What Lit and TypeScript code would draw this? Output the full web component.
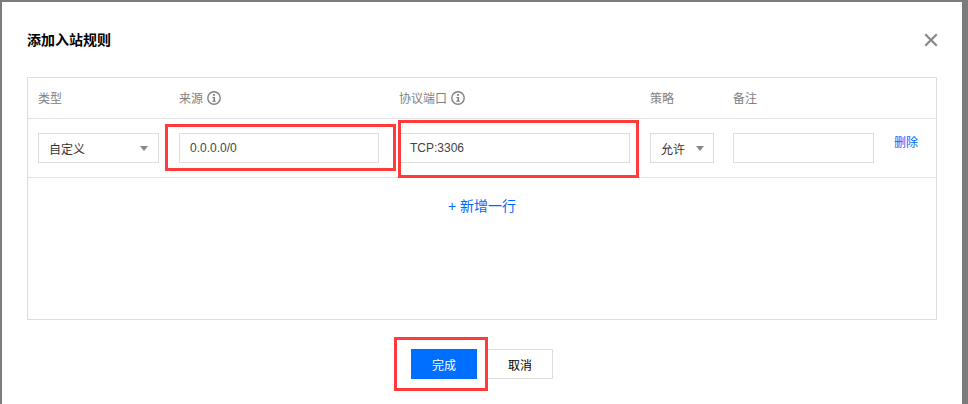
import { LitElement, html, css, svg } from "lit";
import { customElement } from "lit/decorators.js";

const info = svg`<svg class="info" width="14" height="14" viewBox="0 0 14 14"><circle cx="7" cy="7" r="6.2" fill="none" stroke="#808080" stroke-width="1.4"/><rect x="6" y="3" width="2" height="1.8" fill="#808080"/><path d="M5.4 6h2.6v3.8h.9v1H5.2v-1h1.2V7H5.4z" fill="#808080"/></svg>`;

@customElement("app-root")
export class AppRoot extends LitElement {
  static styles = css`
    :host {
      display: block;
      width: 968px;
      height: 404px;
      overflow: hidden;
      background: #7b7b7b;
      font-family: "Liberation Sans", "Noto Sans CJK SC", sans-serif;
      font-size: 12px;
      color: #000;
    }
    .dialog {
      position: relative;
      box-sizing: border-box;
      width: 960px;
      height: 402px;
      margin: 2px 0 0 2px;
      padding: 0 25px;
      background: #fff;
    }
    .head {
      display: flex;
      justify-content: space-between;
      align-items: center;
      height: 75px;
      padding-bottom: 2px;
      box-sizing: border-box;
    }
    .title {
      font-size: 14px;
      font-weight: 700;
      color: #000;
    }
    .close {
      display: block;
      margin: 3px -1px 0 0;
    }
    .table {
      box-sizing: border-box;
      height: 243px;
      border: 1px solid #ddd;
    }
    .row {
      display: grid;
      grid-template-columns: 121px 200px 231px 63px 141px auto;
      column-gap: 20px;
      padding-left: 10px;
      box-sizing: border-box;
      border-bottom: 1px solid #e2e2e2;
    }
    .header {
      height: 41px;
      padding-bottom: 2px;
      align-items: center;
      color: #808080;
    }
    .th {
      display: flex;
      align-items: center;
      gap: 4px;
    }
    .info {
      margin-top: 2px;
    }
    .body {
      height: 59px;
      padding-top: 14px;
      align-items: start;
    }
    .field {
      box-sizing: border-box;
      height: 30px;
      border: 1px solid #ddd;
      padding: 0 10px;
      display: flex;
      align-items: center;
      justify-content: space-between;
      color: #333;
      background: #fff;
    }
    .value {
      color: #444;
    }
    .policy {
      margin-right: -1px;
      padding-right: 9px;
    }
    .arrow {
      width: 0;
      height: 0;
      border-left: 4px solid transparent;
      border-right: 4px solid transparent;
      border-top: 5px solid #888;
    }
    .del {
      color: #0066ff;
      line-height: 18px;
      padding-top: 1px;
    }
    .add {
      height: 54px;
      display: flex;
      align-items: center;
      justify-content: center;
      color: #0066ff;
      font-size: 14px;
    }
    .foot {
      display: flex;
      justify-content: center;
      gap: 10px;
      padding-top: 29px;
    }
    .btn {
      box-sizing: border-box;
      height: 30px;
      width: 66px;
      display: flex;
      align-items: center;
      justify-content: center;
      border: 1px solid #ddd;
      background: #fff;
      color: #000;
    }
    .primary {
      background: #006eff;
      border-color: #006eff;
      color: #fff;
    }
    .mark {
      position: absolute;
      box-sizing: border-box;
      border: 3px solid #ff3b3b;
    }
    .m1 { left: 163px; top: 122px; width: 231px; height: 47px; }
    .m2 { left: 396px; top: 118px; width: 241px; height: 58px; }
    .m3 { left: 392px; top: 335px; width: 94px; height: 54px; }
  `;

  render() {
    return html`
      <div class="dialog">
        <div class="head">
          <span class="title">添加入站规则</span>
          <svg class="close" width="14" height="14" viewBox="0 0 14 14"><path d="M1.2 1.2l11.6 11.6M12.8 1.2L1.2 12.8" stroke="#888" stroke-width="2.2" fill="none"/></svg>
        </div>
        <div class="table">
          <div class="row header">
            <span class="th">类型</span>
            <span class="th">来源 ${info}</span>
            <span class="th">协议端口 ${info}</span>
            <span class="th">策略</span>
            <span class="th">备注</span>
            <span></span>
          </div>
          <div class="row body">
            <div class="field">自定义<i class="arrow"></i></div>
            <div class="field value">0.0.0.0/0</div>
            <div class="field value">TCP:3306</div>
            <div class="field policy">允许<i class="arrow"></i></div>
            <div class="field"></div>
            <span class="del">删除</span>
          </div>
          <div class="add">+ 新增一行</div>
        </div>
        <div class="foot">
          <div class="btn primary">完成</div>
          <div class="btn">取消</div>
        </div>
        <div class="mark m1"></div>
        <div class="mark m2"></div>
        <div class="mark m3"></div>
      </div>
    `;
  }
}
